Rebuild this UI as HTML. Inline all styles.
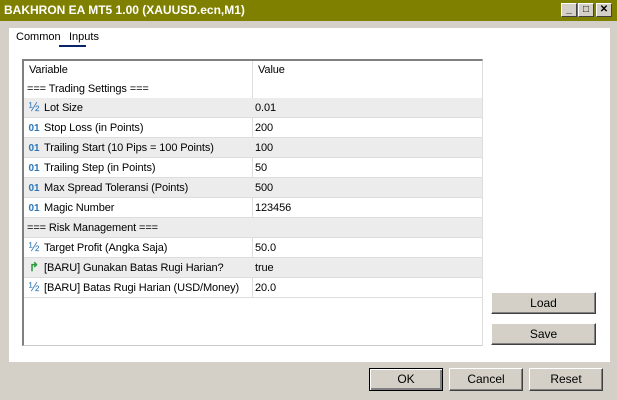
<!DOCTYPE html>
<html><head><style>
*{margin:0;padding:0;box-sizing:border-box}
body{width:617px;height:400px;background:#d4d0c8;font-family:"Liberation Sans",sans-serif;font-size:11px;color:#000;position:relative;overflow:hidden}
.abs{position:absolute;white-space:nowrap}
.title{left:0;top:0;width:617px;height:21px;background:#808000;color:#fff;font-weight:bold;font-size:12px;line-height:21px;padding-left:4px}
.tb{top:3px;width:16px;height:14px;background:#d4d0c8;border:1px solid;border-color:#fff #404040 #404040 #fff;color:#000;font-size:10px;line-height:12px;text-align:center;font-weight:bold}
.panel{left:9px;top:28px;width:601px;height:334px;background:#fff}
.table{left:22px;top:59px;width:461px;height:287px;border-left:2px solid #808080;border-top:2px solid #808080;border-right:1px solid #ddd;border-bottom:1px solid #ccc;background:#fff;overflow:hidden}
.row{position:absolute;left:0;width:459px;height:20px;border-bottom:1px solid #ddd;white-space:nowrap;letter-spacing:-0.1px}
.row.g{background:#ececec}
.c1,.c2{position:absolute;top:0;height:20px;line-height:21px}
.c1{left:3px}
.c2{left:231px}
.div{position:absolute;left:228px;top:0;width:1px;height:237px;background:#ddd}
.ic{display:inline-block;width:14px;color:#2b78b8;font-weight:bold;font-size:10px;margin-right:3px;text-align:center;line-height:10px}
.h{font-size:13px;font-weight:normal}
.btn{background:#d4d0c8;border:1px solid;border-color:#fff #404040 #404040 #fff;box-shadow:inset -1px -1px 0 #808080;text-align:center;line-height:21px;font-size:12px}
</style></head><body>
<div class="abs title">BAKHRON EA MT5 1.00 (XAUUSD.ecn,M1)</div>
<div class="abs tb" style="left:561px">_</div>
<div class="abs tb" style="left:578px">□</div>
<div class="abs tb" style="left:596px">✕</div>
<div class="abs panel"></div>
<div class="abs" style="left:16px;top:31px;font-size:11px">Common</div>
<div class="abs" style="left:69px;top:31px;font-size:11px">Inputs</div>
<div class="abs" style="left:59px;top:45px;width:27px;height:2px;background:#0a246a"></div>
<div class="abs table">
<div class="div"></div>
<div class="row" style="top:0;height:18px;border-bottom:0"><span class="c1" style="left:5px;line-height:19px">Variable</span><span class="c2" style="left:234px;line-height:19px">Value</span></div>
<div class="row" style="top:18px"><span class="c1">=== Trading Settings ===</span></div>
<div class="row g" style="top:37px"><span class="c1"><span class="ic h">½</span>Lot Size</span><span class="c2">0.01</span></div>
<div class="row" style="top:57px"><span class="c1"><span class="ic">01</span>Stop Loss (in Points)</span><span class="c2">200</span></div>
<div class="row g" style="top:77px"><span class="c1"><span class="ic">01</span>Trailing Start (10 Pips = 100 Points)</span><span class="c2">100</span></div>
<div class="row" style="top:97px"><span class="c1"><span class="ic">01</span>Trailing Step (in Points)</span><span class="c2">50</span></div>
<div class="row g" style="top:117px"><span class="c1"><span class="ic">01</span>Max Spread Toleransi (Points)</span><span class="c2">500</span></div>
<div class="row" style="top:137px"><span class="c1"><span class="ic">01</span>Magic Number</span><span class="c2">123456</span></div>
<div class="row g" style="top:157px"><span class="c1">=== Risk Management ===</span></div>
<div class="row" style="top:177px"><span class="c1"><span class="ic h">½</span>Target Profit (Angka Saja)</span><span class="c2">50.0</span></div>
<div class="row g" style="top:197px"><span class="c1"><span class="ic" style="color:#2a9a3a;font-size:12px">↱</span>[BARU] Gunakan Batas Rugi Harian?</span><span class="c2">true</span></div>
<div class="row" style="top:217px"><span class="c1"><span class="ic h">½</span>[BARU] Batas Rugi Harian (USD/Money)</span><span class="c2">20.0</span></div>
</div>
<div class="abs btn" style="left:491px;top:292px;width:105px;height:22px">Load</div>
<div class="abs btn" style="left:491px;top:323px;width:105px;height:22px">Save</div>
<div class="abs btn" style="left:369px;top:368px;width:74px;height:23px;border-color:#000;box-shadow:inset 1px 1px 0 #fff,inset -2px -2px 0 #808080">OK</div>
<div class="abs btn" style="left:449px;top:368px;width:74px;height:23px">Cancel</div>
<div class="abs btn" style="left:529px;top:368px;width:74px;height:23px">Reset</div>
</body></html>
